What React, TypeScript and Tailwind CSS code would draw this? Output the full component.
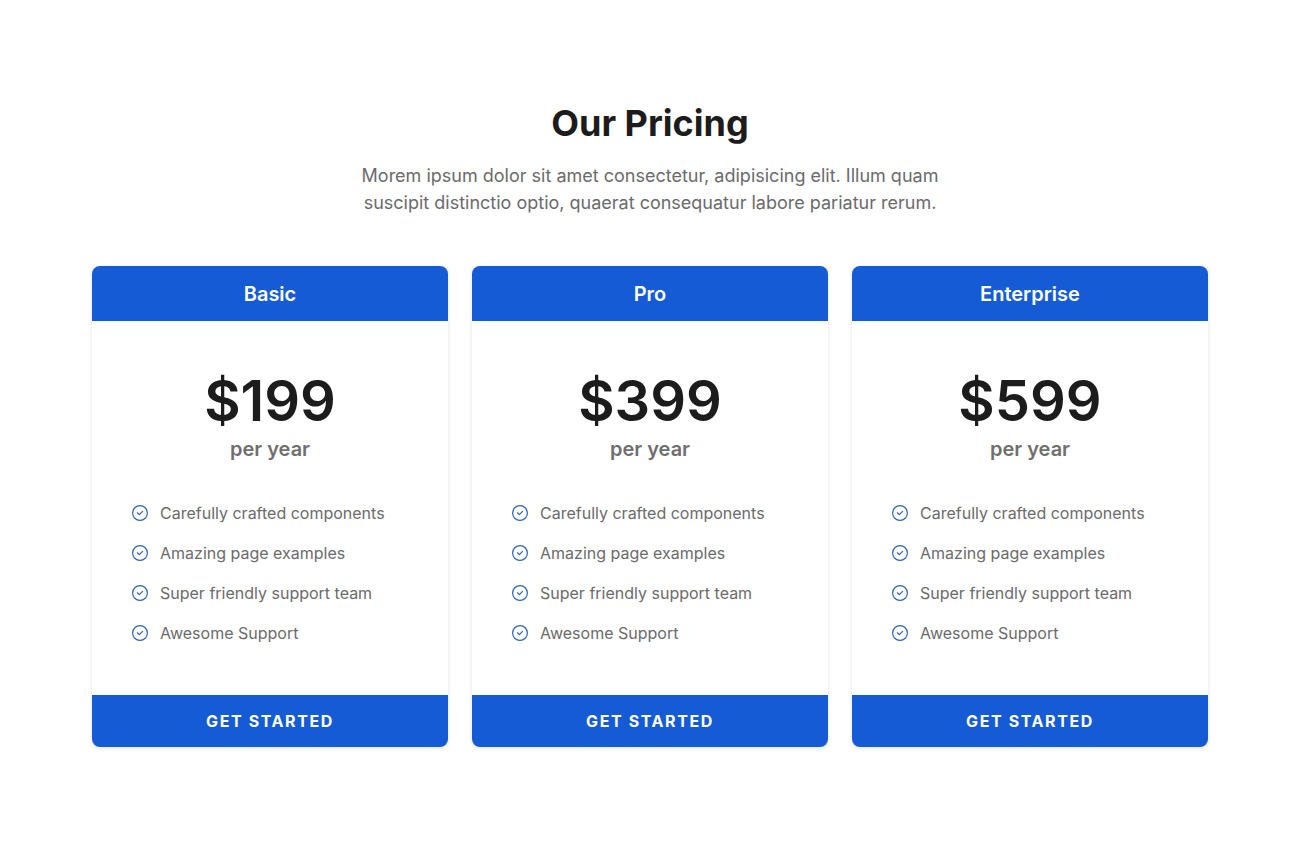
const plans = [
  { name: "Basic", price: "$199" },
  { name: "Pro", price: "$399" },
  { name: "Enterprise", price: "$599" },
];

const features = [
  "Carefully crafted components",
  "Amazing page examples",
  "Super friendly support team",
  "Awesome Support",
];

function CheckIcon() {
  return (
    <svg className="size-4 shrink-0 text-[#2b62b5]" viewBox="0 0 16 16" fill="none" stroke="currentColor" aria-hidden="true">
      <circle cx="8" cy="8" r="7.4" strokeWidth="1.2" />
      <path d="m5.4 7.8 1.9 1.8 3.3-3.2" strokeWidth="1.2" strokeLinecap="round" strokeLinejoin="round" />
    </svg>
  );
}

function PlanCard({ name, price }: { name: string; price: string }) {
  return (
    <article className="flex flex-col overflow-hidden rounded-lg bg-white shadow-[0_1px_4px_rgba(0,0,0,0.12)]">
      <h3 className="bg-[#155bd5] pt-3.5 pb-3 text-center text-xl leading-[29px] font-semibold text-white">{name}</h3>
      <div className="px-10 pt-12 pb-12">
        <p className="text-center text-[56px] leading-16 font-semibold text-[#1c1c1c]">{price}</p>
        <p className="text-center text-xl leading-8 font-semibold text-[#6f6f6f]">per year</p>
        <ul className="mt-9 mb-0.5 flex flex-col gap-4">
          {features.map((feature) => (
            <li key={feature} className="flex items-center gap-3 text-base leading-6 text-[#6b6b6b]">
              <CheckIcon />
              {feature}
            </li>
          ))}
        </ul>
      </div>
      <button type="button" className="mt-auto h-13 bg-[#155bd5] text-base font-bold tracking-widest text-white uppercase">
        Get Started
      </button>
    </article>
  );
}

export default function App() {
  return (
    <main className="min-h-screen bg-white px-5 py-24 font-['Inter',sans-serif]">
      <section className="mx-auto max-w-[1116px]">
        <header className="mx-auto max-w-2xl text-center">
          <h1 className="text-4xl leading-[54px] font-bold text-[#1c1c1c]">Our Pricing</h1>
          <p className="mx-auto mt-3 max-w-[600px] text-lg leading-[27px] text-[#6b6b6b]">
            Morem ipsum dolor sit amet consectetur, adipisicing elit. Illum quam suscipit distinctio optio, quaerat
            consequatur labore pariatur rerum.
          </p>
        </header>
        <div className="mt-[50px] grid grid-cols-1 gap-6 md:grid-cols-3">
          {plans.map((plan) => (
            <PlanCard key={plan.name} {...plan} />
          ))}
        </div>
      </section>
    </main>
  );
}
